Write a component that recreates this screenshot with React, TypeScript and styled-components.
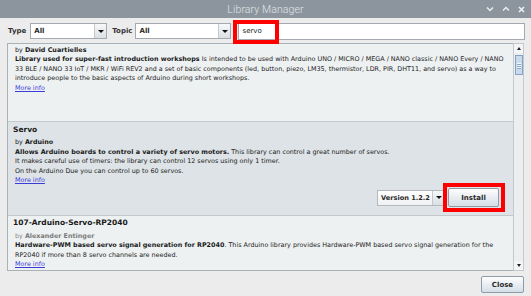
import React from "react";
import styled, { createGlobalStyle } from "styled-components";

const Global = createGlobalStyle`
  html, body { margin: 0; padding: 0; }
  body {
    width: 531px; height: 296px; overflow: hidden;
    background: #ececec;
    font-family: "DejaVu Sans", "Liberation Sans", sans-serif;
    color: #1e1e1e;
  }
`;

const Window = styled.div`
  width: 531px;
  height: 296px;
  display: flex;
  flex-direction: column;
  background: #ececec;
`;

const TitleBar = styled.div`
  height: 18px;
  flex: none;
  background: #8c959d;
  display: grid;
  grid-template-columns: 1fr auto 1fr;
  align-items: center;
`;

const Title = styled.div`
  grid-column: 2;
  font-family: Roboto, "Open Sans", sans-serif;
  font-weight: 300;
  font-size: 10.5px;
  color: #e2e6e9;
  letter-spacing: 0.1px;
`;

const WinControls = styled.div`
  justify-self: end;
  display: flex;
  align-items: center;
  gap: 8px;
  padding-right: 6px;
  svg { display: block; }
`;

const FilterRow = styled.div`
  height: 25px;
  flex: none;
  display: flex;
  align-items: flex-start;
  padding: 5px 6px 0 8px;
  box-sizing: border-box;
`;

const Label = styled.span<{ $gap: number }>`
  font-weight: bold;
  font-size: 7px;
  line-height: 16px;
  color: #333;
  margin-right: ${(p) => p.$gap}px;
`;

const Combo = styled.div<{ $w: number; $after: number }>`
  width: ${(p) => p.$w}px;
  height: 16px;
  box-sizing: border-box;
  border: 1px solid #a4aaaf;
  background: #fff;
  display: flex;
  margin-right: ${(p) => p.$after}px;
`;

const ComboValue = styled.div<{ $size?: number }>`
  flex: 1;
  white-space: nowrap;
  overflow: hidden;
  font-weight: bold;
  font-size: ${(p) => p.$size ?? 7}px;
  line-height: 14px;
  padding-left: 3px;
  color: #2a2a2a;
`;

const ComboArrow = styled.div`
  width: 11px;
  flex: none;
  border-left: 1px solid #c3c8cc;
  background: linear-gradient(#f7f8f9, #dadfe3);
  display: flex;
  align-items: center;
  justify-content: center;
`;

const Triangle = styled.div`
  width: 0;
  height: 0;
  border-left: 3px solid transparent;
  border-right: 3px solid transparent;
  border-top: 3px solid #111;
`;

const UpTriangle = styled.div`
  width: 0;
  height: 0;
  border-left: 2.5px solid transparent;
  border-right: 2.5px solid transparent;
  border-bottom: 3px solid #222;
`;

const DownTriangle = styled.div`
  width: 0;
  height: 0;
  border-left: 2.5px solid transparent;
  border-right: 2.5px solid transparent;
  border-top: 3px solid #222;
`;

const Highlight = styled.div<{ $l: number; $t: number; $r: number; $b: number }>`
  position: relative;
  display: flex;
  &::after {
    content: "";
    position: absolute;
    left: ${(p) => p.$l}px;
    top: ${(p) => p.$t}px;
    right: ${(p) => p.$r}px;
    bottom: ${(p) => p.$b}px;
    border: 4px solid #ff0000;
    pointer-events: none;
    z-index: 2;
  }
`;

const SearchWrap = styled(Highlight)`
  flex: 1;
`;

const Search = styled.div`
  flex: 1;
  height: 17px;
  box-sizing: border-box;
  border: 1px solid #a4aaaf;
  background: #fff;
  font-size: 7px;
  line-height: 15px;
  padding-left: 3px;
  color: #222;
`;

const ListArea = styled.div`
  flex: 1;
  display: flex;
  padding: 0 7px 0 7px;
  min-height: 0;
`;

const List = styled.div`
  flex: 1;
  border: 1px solid #aab1b6;
  border-right: none;
  background: #eef1f2;
  overflow: hidden;
  display: flex;
  flex-direction: column;
`;

const Item = styled.div<{ $selected?: boolean; $first?: boolean; $pt: number; $pb: number }>`
  flex: none;
  background: ${(p) => (p.$selected ? "#dde3e6" : "#eef1f2")};
  border-top: ${(p) => (p.$first ? "none" : "1px solid #c3c9cd")};
  padding: ${(p) => p.$pt}px 0 ${(p) => p.$pb}px 5px;
  display: flex;
  flex-direction: column;
`;

const Name = styled.div`
  font-weight: bold;
  font-size: 7.5px;
  line-height: 10px;
  color: #1a1a1a;
  margin-bottom: 3.5px;
`;

const Body = styled.div`
  padding-left: 2px;
  font-size: 6.4px;
  line-height: 9.5px;
`;

const Line = styled.div<{ $muted?: boolean }>`
  white-space: nowrap;
  color: ${(p) => (p.$muted ? "#8a8a8a" : "#222")};
  b { font-weight: bold; color: ${(p) => (p.$muted ? "#7a7a7a" : "#1a1a1a")}; }
`;

const Link = styled.a`
  color: #3b3bd8;
  text-decoration: underline;
`;

const Actions = styled.div`
  display: flex;
  justify-content: flex-end;
  align-items: center;
  gap: 3px;
  margin-top: 2px;
  padding-right: 14px;
  height: 20px;
`;

const VersionCombo = styled.div`
  width: 68px;
  height: 16px;
  box-sizing: border-box;
  border: 1px solid #b3b9be;
  background: linear-gradient(#ffffff, #eef0f2);
  display: flex;
`;

const Button = styled.button<{ $w: number; $h: number }>`
  width: ${(p) => p.$w}px;
  height: ${(p) => p.$h}px;
  padding: 0;
  box-sizing: border-box;
  border: 1px solid #8f9ba7;
  border-radius: 2px;
  background: linear-gradient(#fdfdfe, #d5dee7);
  font-family: "DejaVu Sans", sans-serif;
  font-weight: bold;
  font-size: 7px;
  color: #2a2a2a;
`;

const ScrollBar = styled.div`
  width: 11px;
  flex: none;
  border: 1px solid #c4c9cd;
  background: #eceeef;
  display: flex;
  flex-direction: column;
  align-items: center;
  box-sizing: border-box;
`;

const ScrollBtn = styled.div`
  width: 9px;
  height: 9px;
  display: flex;
  align-items: center;
  justify-content: center;
  background: #f4f5f6;
  flex: none;
`;

const Thumb = styled.div`
  width: 8px;
  height: 20px;
  margin-top: 2px;
  box-sizing: border-box;
  border: 1px solid #83a2c6;
  background: #c9daec;
  display: flex;
  flex-direction: column;
  align-items: center;
  justify-content: center;
  gap: 1px;
  flex: none;
`;

const Grip = styled.div`
  width: 4px;
  height: 1px;
  background: #f4f8fc;
  box-shadow: 0 1px 0 #8aa6c8;
`;

const Track = styled.div`
  flex: 1;
`;

const Footer = styled.div`
  height: 25px;
  flex: none;
  display: flex;
  justify-content: flex-end;
  align-items: flex-start;
  padding: 5px 7px 0 0;
  box-sizing: border-box;
`;

const Chevron = ({ d }: { d: string }) => (
  <svg width="8" height="6" viewBox="0 0 8 6">
    <path d={d} fill="none" stroke="#e9edf0" strokeWidth="1.5" />
  </svg>
);

export default function App() {
  return (
    <>
      <Global />
      <Window>
        <TitleBar>
          <Title>Library Manager</Title>
          <WinControls>
            <Chevron d="M1 1.5 L4 4.5 L7 1.5" />
            <Chevron d="M1 4.5 L4 1.5 L7 4.5" />
            <svg width="7" height="7" viewBox="0 0 7 7">
              <path d="M1 1 L6 6 M6 1 L1 6" stroke="#eef1f3" strokeWidth="1.6" />
            </svg>
          </WinControls>
        </TitleBar>

        <FilterRow>
          <Label $gap={4}>Type</Label>
          <Combo $w={77} $after={5}>
            <ComboValue>All</ComboValue>
            <ComboArrow><Triangle /></ComboArrow>
          </Combo>
          <Label $gap={3}>Topic</Label>
          <Combo $w={96} $after={7}>
            <ComboValue>All</ComboValue>
            <ComboArrow><Triangle /></ComboArrow>
          </Combo>
          <SearchWrap $l={-5} $t={-3} $r={246} $b={-4}>
            <Search>servo</Search>
          </SearchWrap>
        </FilterRow>

        <ListArea>
          <List>
            <Item $first $pt={1.5} $pb={28}>
              <Body>
                <Line>by <b>David Cuartielles</b></Line>
                <Line><b>Library used for super-fast introduction workshops</b> Is intended to be used with Arduino UNO / MICRO / MEGA / NANO classic / NANO Every / NANO</Line>
                <Line>33 BLE / NANO 33 IoT / MKR / WiFi REV2 and a set of basic components (led, button, piezo, LM35, thermistor, LDR, PIR, DHT11, and servo) as a way to</Line>
                <Line>introduce people to the basic aspects of Arduino during short workshops.</Line>
                <Line><Link>More info</Link></Line>
              </Body>
            </Item>

            <Item $selected $pt={2.5} $pb={7}>
              <Name>Servo</Name>
              <Body>
                <Line>by <b>Arduino</b></Line>
                <Line><b>Allows Arduino boards to control a variety of servo motors.</b> This library can control a great number of servos.</Line>
                <Line>It makes careful use of timers: the library can control 12 servos using only 1 timer.</Line>
                <Line>On the Arduino Due you can control up to 60 servos.</Line>
                <Line><Link>More info</Link></Line>
              </Body>
              <Actions>
                <VersionCombo>
                  <ComboValue $size={6.6}>Version 1.2.2</ComboValue>
                  <ComboArrow><Triangle /></ComboArrow>
                </VersionCombo>
                <Highlight $l={-5} $t={-5} $r={-6} $b={-5}>
                  <Button $w={51} $h={19}>Install</Button>
                </Highlight>
              </Actions>
            </Item>

            <Item $pt={2.5} $pb={6}>
              <Name>107-Arduino-Servo-RP2040</Name>
              <Body>
                <Line $muted>by <b>Alexander Entinger</b></Line>
                <Line><b>Hardware-PWM based servo signal generation for RP2040</b>. This Arduino library provides Hardware-PWM based servo signal generation for the</Line>
                <Line>RP2040 if more than 8 servo channels are needed.</Line>
                <Line><Link>More info</Link></Line>
              </Body>
            </Item>
          </List>
          <ScrollBar>
            <ScrollBtn><UpTriangle /></ScrollBtn>
            <Thumb><Grip /><Grip /><Grip /></Thumb>
            <Track />
            <ScrollBtn><DownTriangle /></ScrollBtn>
          </ScrollBar>
        </ListArea>

        <Footer>
          <Button $w={43} $h={17}>Close</Button>
        </Footer>
      </Window>
    </>
  );
}
